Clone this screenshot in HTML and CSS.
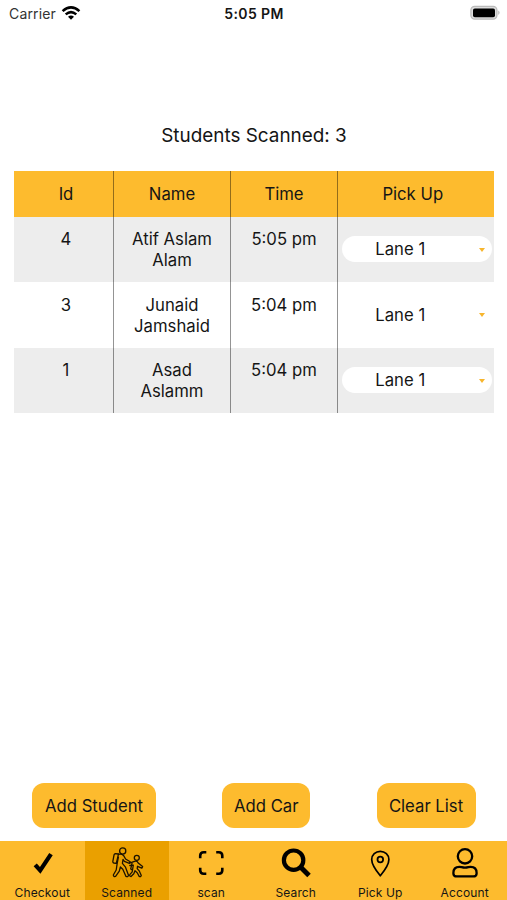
FILE: index.html
```html
<!DOCTYPE html>
<html lang="en">
<head>
<meta charset="utf-8">
<title>Students Scanned</title>
<link rel="stylesheet" href="styles.css">
</head>
<body>
<div class="screen">
  <header class="status">
    <div class="carrier"><span>Carrier</span>
      <svg width="20" height="16" viewBox="0 0 20 16"><path d="M1.6 6.1Q10-1.5 18.4 6.1" fill="none" stroke="#000" stroke-width="2.6"/><path d="M4.7 9.4Q10 4.8 15.3 9.4" fill="none" stroke="#000" stroke-width="2.5"/><path d="M10 14.8 7 11.7Q10 9.4 13 11.7Z"/></svg>
    </div>
    <div class="clock">5:05 PM</div>
    <div class="battery"><svg width="31" height="16" viewBox="0 0 31 16"><rect x=".9" y="1.3" width="26" height="12.8" rx="3.8" fill="#ddd" stroke="#bbb" stroke-width="1.3"/><rect x="3" y="3.4" width="22" height="8.8" rx="1.8"/><path d="M28.4 5.5q2.2 2.2 0 4.4z" fill="#aaa"/></svg></div>
  </header>
  <h1 class="title">Students Scanned: 3</h1>
  <div class="table">
    <div class="row head"><div class="cell id">Id</div><div class="cell">Name</div><div class="cell">Time</div><div class="cell pick">Pick Up</div></div>
    <div class="row shade"><div class="cell id">4</div><div class="cell">Atif Aslam<br>Alam</div><div class="cell">5:05 pm</div><div class="cell lane"><div class="select"><span>Lane 1</span><i class="caret"></i></div></div></div>
    <div class="row"><div class="cell id">3</div><div class="cell">Junaid<br>Jamshaid</div><div class="cell">5:04 pm</div><div class="cell lane"><div class="select"><span>Lane 1</span><i class="caret"></i></div></div></div>
    <div class="row shade"><div class="cell id">1</div><div class="cell">Asad<br>Aslamm</div><div class="cell">5:04 pm</div><div class="cell lane"><div class="select"><span>Lane 1</span><i class="caret"></i></div></div></div>
  </div>
  <div class="actions">
    <button class="btn student">Add Student</button>
    <button class="btn car">Add Car</button>
    <button class="btn clear">Clear List</button>
  </div>
  <nav class="tabs">
    <div class="tab"><svg width="36" height="36" viewBox="0 0 36 36"><path d="M11.2 19.8 16.2 25.4 27 9.2" fill="none" stroke="#000" stroke-width="4.2"/></svg><span>Checkout</span></div>
    <div class="tab active"><svg width="36" height="36" viewBox="-3 -1 36 36"><g fill="none" stroke="#1c1300" stroke-width="1.3" stroke-linejoin="round" stroke-linecap="round"><circle cx="10.7" cy="5" r="3.1"/><path d="M6.4 8 3.4 7.6Q2.4 7.7 2.1 8.7L.8 15.6Q.8 16.8 1.8 17L4.3 17.4"/><path d="M6.4 8.4Q9.5 7.6 11.5 9.4L13.6 13 18.2 15.8 17.4 17.4 12.4 15.3 11 13.5 10.4 17.4 13.5 21.2 16.5 29.3Q16 31.4 14 30.4L10.8 23.3 8.4 21 7.3 25.2 3.6 30.4Q1.5 31 1.3 29L4.2 24 5.2 17.4 6.4 11.2"/><path d="M6.4 8.4 4.3 17.4"/><circle cx="24.8" cy="11.8" r="2.5"/><path d="M18.2 16.8 22.6 15.3Q25.2 14.7 26.2 17L30.6 20.6 29.8 22.2 25.5 20.3 25.2 22.6 27.4 25.2 29.3 29.4Q28.8 31.3 27.2 30.4L25.2 26.7 23 24.7 21.8 27.7 19 30.5Q17.2 30.4 17.8 28.7L20.2 25.9 21.3 19.2 17.8 19.5"/><path d="M20 17.4 18.7 23 20.4 23.8"/></g></svg><span>Scanned</span></div>
    <div class="tab"><svg width="36" height="36" viewBox="0 0 36 36"><path d="M7.2 13.3V10.7Q7.2 7.2 10.7 7.2H13.3M23.2 7.2H25.8Q29.3 7.2 29.3 10.7V13.3M29.3 22.7V25.3Q29.3 28.8 25.8 28.8H23.2M13.3 28.8H10.7Q7.2 28.8 7.2 25.3V22.7" fill="none" stroke="#000" stroke-width="2.6"/></svg><span>scan</span></div>
    <div class="tab"><svg width="36" height="36" viewBox="0 0 36 36"><circle cx="15.6" cy="15.2" r="9.7" fill="none" stroke="#000" stroke-width="4.2"/><path d="M23 22.4 31 30.4" stroke="#000" stroke-width="5"/></svg><span>Search</span></div>
    <div class="tab"><svg width="36" height="36" viewBox="0 0 36 36"><path d="M18.3 30.8C15.5 27.4 9.7 19.8 9.7 14.5A8.6 8.2 0 0 1 26.9 14.5C26.9 19.8 21.1 27.4 18.3 30.8Z" fill="none" stroke="#000" stroke-width="1.7" stroke-linejoin="round"/><circle cx="18.3" cy="14.5" r="2.8" fill="none" stroke="#000" stroke-width="1.8"/></svg><span>Pick Up</span></div>
    <div class="tab"><svg width="36" height="36" viewBox="0 0 36 36"><g fill="none" stroke="#000" stroke-width="2.3"><circle cx="18" cy="11.3" r="7.2"/><path d="M9.8 31.4H26.2Q29.6 31.4 29.6 28.4V27.8Q29.6 21.8 23.6 21.8C21.7 21.8 20.8 22.7 18 22.7S14.3 21.8 12.4 21.8Q6.4 21.8 6.4 27.8V28.4Q6.4 31.4 9.8 31.4Z"/></g></svg><span>Account</span></div>
  </nav>
</div>
</body>
</html>
```
FILE: styles.css
```css
* { box-sizing: border-box; }
body { margin: 0; background: #fff; color: #151515; font-family: Inter, "Liberation Sans", sans-serif; }
.screen { height: 900px; display: flex; flex-direction: column; overflow: hidden; }
.status { height: 27px; display: grid; grid-template-columns: 1fr auto 1fr; align-items: center; padding: 0 6px 0 9px; font-size: 14px; }
.carrier { display: flex; align-items: center; gap: 5px; color: #333; letter-spacing: .15px; }
.carrier svg { margin-top: -1px; }
.clock { font-weight: 600; letter-spacing: .4px; margin-left: -2px; }
.battery { display: flex; justify-content: flex-end; margin-top: -1px; }
.title { margin: 97px 0 0; height: 24px; line-height: 24px; font-size: 18.9px; font-weight: 400; text-align: center; padding-left: 1px; }
.table { margin: 23px 13px 0 13.5px; font-size: 16.7px; line-height: 21px; }
.row { display: grid; grid-template-columns: 100px 117px 107px 1fr; height: 65.5px; }
.head { height: 45.5px; background: #fdbb2e; }
.shade { background: #ededed; }
.cell { padding-top: 12.5px; padding-left: 1px; text-align: center; border-right: 1px solid rgba(0, 0, 0, .42); }
.cell:last-child { border-right: 0; }
.cell.id { padding-left: 6px; }
.cell.pick { padding-right: 7px; }
.cell.lane { padding: 0 2px 0 4px; display: flex; align-items: center; }
.select { flex: 1; height: 26px; border-radius: 13px; background: #fff; display: flex; align-items: center; }
.select span { flex: 1; padding: 1px 20px 0 0; }
.caret { border: 3.5px solid transparent; border-top: 4.5px solid #f7b52c; border-bottom: 0; margin: 1px 7px 0 0; }
.actions { margin-top: auto; display: flex; justify-content: space-between; padding: 0 31.5px 0 32px; }
.btn { height: 45px; border: 0; border-radius: 12px; padding: 0; background: #fdbb2e; color: #151515; font: 16.7px Inter, "Liberation Sans", sans-serif; }
.student { width: 124px; }
.car { width: 88px; }
.clear { width: 99px; }
.tabs { margin-top: 12.5px; height: 59.5px; display: grid; grid-template-columns: repeat(6, 1fr); background: #fdbb2e; }
.tab { display: flex; flex-direction: column; align-items: center; padding-top: 4.5px; font-size: 12px; line-height: 14px; letter-spacing: .15px; }
.tab span { margin: 4.5px 0 0; }
.active { background: #eaa000; }
```
